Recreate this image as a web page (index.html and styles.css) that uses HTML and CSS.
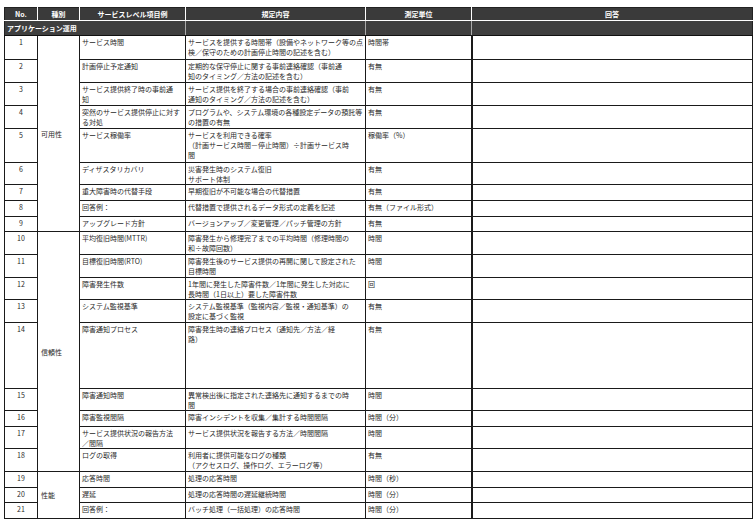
FILE: index.html
```html
<!DOCTYPE html>
<html lang="ja">
<head>
<meta charset="utf-8">
<title>サービスレベル項目</title>
<link rel="stylesheet" href="styles.css">
</head>
<body>
<table class="sla">
  <colgroup>
    <col class="c-no"><col class="c-kind"><col class="c-item"><col class="c-rule"><col class="c-unit"><col class="c-ans">
  </colgroup>
  <thead>
    <tr class="head">
      <th>No.</th><th>種別</th><th>サービスレベル項目例</th><th>規定内容</th><th>測定単位</th><th>回答</th>
    </tr>
    <tr class="cat">
      <th colspan="3" class="cat-name">アプリケーション運用</th><th></th><th></th><th></th>
    </tr>
  </thead>
  <tbody>
    <tr class="h24"><td class="no">1</td><td class="kind" rowspan="9">可用性</td><td>サービス時間</td><td>サービスを提供する時間帯（設備やネットワーク等の点<br>検／保守のための計画停止時間の記述を含む）</td><td>時間帯</td><td class="ans"></td></tr>
    <tr class="h23"><td class="no">2</td><td>計画停止予定通知</td><td>定期的な保守停止に関する事前連絡確認（事前通<br>知のタイミング／方法の記述を含む）</td><td>有無</td><td class="ans"></td></tr>
    <tr class="h23"><td class="no">3</td><td>サービス提供終了時の事前通<br>知</td><td>サービス提供を終了する場合の事前連絡確認（事前<br>通知のタイミング／方法の記述を含む）</td><td>有無</td><td class="ans"></td></tr>
    <tr class="h23"><td class="no">4</td><td>突然のサービス提供停止に対す<br>る対処</td><td>プログラムや、システム環境の各種設定データの預託等<br>の措置の有無</td><td>有無</td><td class="ans"></td></tr>
    <tr class="h34"><td class="no">5</td><td>サービス稼働率</td><td>サービスを利用できる確率<br>（計画サービス時間－停止時間）÷計画サービス時<br>間</td><td>稼働率（%）</td><td class="ans"></td></tr>
    <tr class="h22"><td class="no">6</td><td>ディザスタリカバリ</td><td>災害発生時のシステム復旧<br>サポート体制</td><td>有無</td><td class="ans"></td></tr>
    <tr class="h16"><td class="no">7</td><td>重大障害時の代替手段</td><td>早期復旧が不可能な場合の代替措置</td><td>有無</td><td class="ans"></td></tr>
    <tr class="h16"><td class="no">8</td><td>回答例：</td><td>代替措置で提供されるデータ形式の定義を記述</td><td>有無（ファイル形式）</td><td class="ans"></td></tr>
    <tr class="h15"><td class="no">9</td><td>アップグレード方針</td><td>バージョンアップ／変更管理／パッチ管理の方針</td><td>有無</td><td class="ans"></td></tr>
    <tr class="h23"><td class="no">10</td><td class="kind" rowspan="9">信頼性</td><td>平均復旧時間(MTTR)</td><td>障害発生から修理完了までの平均時間（修理時間の<br>和÷故障回数）</td><td>時間</td><td class="ans"></td></tr>
    <tr class="h23"><td class="no">11</td><td>目標復旧時間(RTO)</td><td>障害発生後のサービス提供の再開に関して設定された<br>目標時間</td><td>時間</td><td class="ans"></td></tr>
    <tr class="h22"><td class="no">12</td><td>障害発生件数</td><td>1年間に発生した障害件数／1年間に発生した対応に<br>長時間（1日以上）要した障害件数</td><td>回</td><td class="ans"></td></tr>
    <tr class="h23"><td class="no">13</td><td>システム監視基準</td><td>システム監視基準（監視内容／監視・通知基準）の<br>設定に基づく監視</td><td>有無</td><td class="ans"></td></tr>
    <tr class="h66"><td class="no">14</td><td>障害通知プロセス</td><td>障害発生時の連絡プロセス（通知先／方法／経<br>路）</td><td>有無</td><td class="ans"></td></tr>
    <tr class="h22"><td class="no">15</td><td>障害通知時間</td><td>異常検出後に指定された連絡先に通知するまでの時<br>間</td><td>時間</td><td class="ans"></td></tr>
    <tr class="h16"><td class="no">16</td><td>障害監視間隔</td><td>障害インシデントを収集／集計する時間間隔</td><td>時間（分）</td><td class="ans"></td></tr>
    <tr class="h22"><td class="no">17</td><td>サービス提供状況の報告方法<br>／間隔</td><td>サービス提供状況を報告する方法／時間間隔</td><td>時間</td><td class="ans"></td></tr>
    <tr class="h23"><td class="no">18</td><td>ログの取得</td><td>利用者に提供可能なログの種類<br>（アクセスログ、操作ログ、エラーログ等）</td><td>有無</td><td class="ans"></td></tr>
    <tr class="h16"><td class="no">19</td><td class="kind" rowspan="3">性能</td><td>応答時間</td><td>処理の応答時間</td><td>時間（秒）</td><td class="ans"></td></tr>
    <tr class="h15"><td class="no">20</td><td>遅延</td><td>処理の応答時間の遅延継続時間</td><td>時間（分）</td><td class="ans"></td></tr>
    <tr class="h16"><td class="no">21</td><td>回答例：</td><td>バッチ処理（一括処理）の応答時間</td><td>時間（分）</td><td class="ans"></td></tr>
  </tbody>
</table>
</body>
</html>
```

FILE: styles.css
```css
html, body {
  margin: 0;
  background: #fff;
}
body {
  padding: 7px 0 0 4px;
  font-family: "Noto Sans CJK JP", "Noto Sans", sans-serif;
  font-size: 7px;
  color: #2a2a2a;
}
.sla {
  border-collapse: collapse;
  table-layout: fixed;
  width: 748px;
}
.c-no { width: 33px; }
.c-kind { width: 42px; }
.c-item { width: 106px; }
.c-rule { width: 180px; }
.c-unit { width: 106px; }
.c-ans { width: 281px; }

.head { height: 13px; }
.head th {
  padding: 0;
  background: #3a3a3a;
  color: #fff;
  font-weight: bold;
  text-align: center;
  vertical-align: middle;
  line-height: 10px;
  border: 1px solid #fff;
  border-top-color: #222;
}
.head th:first-child { border-left-color: #222; }
.head th:last-child { border-right-color: #222; }
.cat { height: 15px; }
.cat th {
  padding: 0 2px;
  background: #3f3f3f;
  color: #fff;
  font-weight: bold;
  text-align: left;
  vertical-align: middle;
  line-height: 10px;
  border: 1px solid #aaa;
  border-top-color: #fff;
  border-bottom-color: #111;
}
.cat th:first-child { border-left-color: #222; }
.cat th:last-child { border-right-color: #222; }

td {
  padding: 1px 0 0 2px;
  line-height: 10px;
  vertical-align: top;
  white-space: nowrap;
  overflow: hidden;
  border: 1px solid #1a1a1a;
}
td.no { text-align: center; padding-left: 0; }
td.kind { vertical-align: middle; padding: 0 0 0 3px; }
td.ans { border-left-width: 2px; }

.h15 { height: 15px; }
.h16 { height: 16px; }
.h22 { height: 22px; }
.h23 { height: 23px; }
.h24 { height: 24px; }
.h34 { height: 34px; }
.h66 { height: 66px; }
```
